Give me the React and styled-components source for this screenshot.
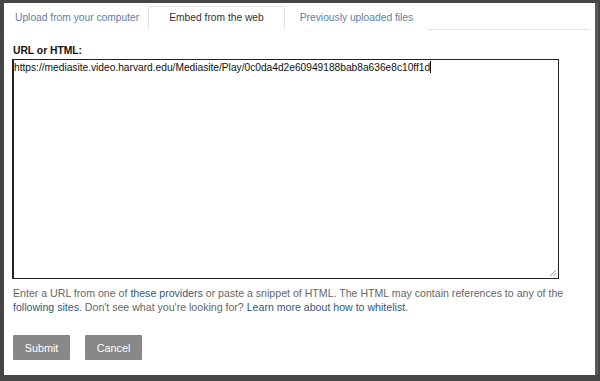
import React from 'react'
import styled, { createGlobalStyle } from 'styled-components'

const Global = createGlobalStyle`
  html, body {
    margin: 0;
    padding: 0;
    background: #464646;
    font-family: "Liberation Sans", Arial, sans-serif;
  }
`

const Page = styled.div`
  width: 600px;
  height: 381px;
  padding: 3px 0 0 4px;
  box-sizing: border-box;
  overflow: hidden;
`

const Dialog = styled.div`
  width: 591px;
  height: 372px;
  background: #fff;
  box-shadow: 3px 0 0 #5a5a5a;
  padding: 3px 5px 0 8px;
  box-sizing: border-box;
  display: flex;
  flex-direction: column;
`

const Tabs = styled.div`
  display: flex;
  border-bottom: 1px solid #e4e4e4;
  height: 23px;
`

const Tab = styled.div`
  height: 24px;
  box-sizing: border-box;
  padding: 0 ${p => p.pr}px 0 ${p => p.pl}px;
  font-size: 10.25px;
  line-height: 22px;
  color: ${p => (p.active ? '#333' : '#5c7ea8')};
  background: #fff;
  border: 1px solid ${p => (p.active ? '#e4e4e4' : 'transparent')};
  border-bottom: none;
  border-radius: 2px 2px 0 0;
  white-space: nowrap;
`

const Body = styled.div`
  padding: 14px 0 0 0;
  display: flex;
  flex-direction: column;
`

const Label = styled.label`
  font-size: 10.3px;
  font-weight: bold;
  color: #111;
  margin-left: 1px;
  margin-bottom: 2px;
  line-height: 13px;
`

const Area = styled.div`
  width: 547px;
  height: 220px;
  box-sizing: border-box;
  border: 1px solid #222;
  border-left-width: 2px;
  padding: 1px 0 0 0;
  font-size: 10.2px;
  line-height: 13px;
  color: #111;
  position: relative;
`

const Caret = styled.span`
  display: inline-block;
  width: 1px;
  height: 12px;
  background: #000;
  vertical-align: -2px;
`

const Grip = styled.svg`
  position: absolute;
  right: 1px;
  bottom: 1px;
`

const Help = styled.p`
  margin: 7px 0 0 1px;
  font-size: 10.6px;
  line-height: 14px;
  color: #666;
  width: 565px;
`

const Link = styled.a`
  color: #2d5a83;
  text-decoration: none;
`

const Actions = styled.div`
  display: flex;
  gap: 15px;
  margin: 21px 0 0 1px;
`

const Button = styled.button`
  width: 57px;
  height: 25px;
  border: none;
  border-radius: 1px;
  background: #888;
  color: #fff;
  font-family: "Liberation Sans", Arial, sans-serif;
  font-size: 10.8px;
  padding: 0;
`

export default function App() {
  return (
    <Page>
      <Global />
      <Dialog>
        <Tabs>
          <Tab pl={2} pr={8}>Upload from your computer</Tab>
          <Tab active pl={20} pr={20}>Embed from the web</Tab>
          <Tab pl={14} pr={14}>Previously uploaded files</Tab>
        </Tabs>
        <Body>
          <Label>URL or HTML:</Label>
          <Area>
            https://mediasite.video.harvard.edu/Mediasite/Play/0c0da4d2e60949188bab8a636e8c10ff1d<Caret />
            <Grip width="8" height="8" viewBox="0 0 8 8">
              <path d="M7 1L1 7M7 4L4 7" stroke="#999" strokeWidth="1" />
            </Grip>
          </Area>
          <Help>
            Enter a URL from one of <Link href="#">these providers</Link> or paste a snippet of HTML. The HTML may contain references to any of the{' '}
            <Link href="#">following sites</Link>. Don't see what you're looking for? <Link href="#">Learn more about how to whitelist</Link>.
          </Help>
          <Actions>
            <Button>Submit</Button>
            <Button>Cancel</Button>
          </Actions>
        </Body>
      </Dialog>
    </Page>
  )
}
